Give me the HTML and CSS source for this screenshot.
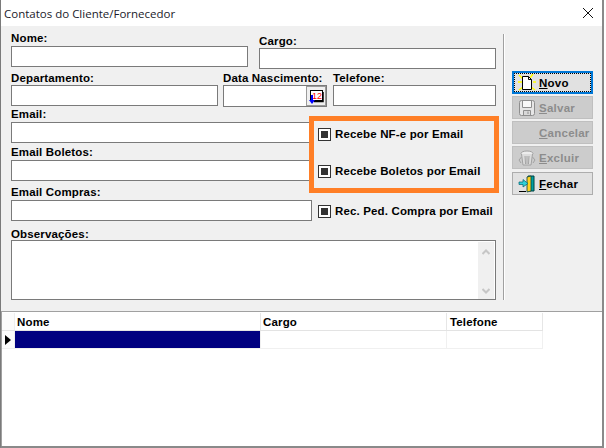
FILE: index.html
```html
<!DOCTYPE html>
<html lang="pt-BR">
<head>
<meta charset="utf-8">
<title>Contatos do Cliente/Fornecedor</title>
<link rel="stylesheet" href="styles.css">
</head>
<body>
<div class="window">
  <header class="titlebar">
    <span class="title">Contatos do Cliente/Fornecedor</span>
    <svg class="close" width="10" height="10" viewBox="0 0 10 10"><path d="M0 0L10 10M10 0L0 10" stroke="#111" stroke-width="1" fill="none"/></svg>
  </header>
  <div class="body">
    <form class="form">
      <div class="row row-1">
        <div class="field f-nome"><label>Nome:</label><div class="input"></div></div>
        <div class="field f-cargo"><label>Cargo:</label><div class="input"></div></div>
      </div>
      <div class="row row-2">
        <div class="field f-depto"><label>Departamento:</label><div class="input"></div></div>
        <div class="field f-data"><label>Data Nascimento:</label>
          <div class="input date">
            <span class="date-btn">
              <svg width="16" height="16" viewBox="0 0 16 16">
                <rect x="2.500" y="2.500" width="12" height="10" fill="#fff" stroke="#000"/>
                <path d="M15 4V13.500H6" stroke="#000" stroke-width="1.500" fill="none"/>
                <text class="cal-num" x="9" y="11" text-anchor="middle">12</text>
                <path d="M4 7V13" stroke="#00f" stroke-width="2"/>
                <path d="M1 12H7L4 16Z" fill="#00f"/>
              </svg>
            </span>
          </div>
        </div>
        <div class="field f-fone"><label>Telefone:</label><div class="input"></div></div>
      </div>
      <div class="row row-3">
        <div class="field f-full"><label>Email:</label><div class="input"></div></div>
      </div>
      <div class="row row-4">
        <div class="field f-full"><label>Email Boletos:</label><div class="input"></div></div>
      </div>
      <div class="row row-5">
        <div class="field f-compras"><label>Email Compras:</label><div class="input"></div></div>
        <div class="check check-compras"><span class="box"></span><span>Rec. Ped. Compra por Email</span></div>
      </div>
      <div class="row row-6">
        <div class="field f-full"><label>Observações:</label>
          <div class="input memo">
            <div class="scroll">
              <svg width="8" height="6" viewBox="0 0 8 6"><path d="M0.5 5L4 1.5L7.5 5" stroke="#c6c6c6" stroke-width="2" fill="none"/></svg>
              <svg width="8" height="6" viewBox="0 0 8 6"><path d="M0.5 1L4 4.5L7.5 1" stroke="#c6c6c6" stroke-width="2" fill="none"/></svg>
            </div>
          </div>
        </div>
      </div>
      <div class="highlight">
        <div class="check"><span class="box"></span><span>Recebe NF-e por Email</span></div>
        <div class="check"><span class="box"></span><span>Recebe Boletos por Email</span></div>
      </div>
    </form>
    <div class="separator"></div>
    <div class="actions">
      <div class="btn focus">
        <span class="ico">
          <svg width="18" height="18" viewBox="0 0 18 18">
            <path d="M1 1L5 5M15 0L12 4M1 16L5 13M17 16L13 13M0 8H4M15 8H18" stroke="#ffff00" stroke-width="1.500"/>
            <path d="M4.500 2.500H10.500L13.500 5.500V15.500H4.500Z" fill="#fff" stroke="#000"/>
            <path d="M10.500 2.500V5.500H13.500" fill="none" stroke="#000"/>
          </svg>
        </span>
        <span class="lbl"><u>N</u>ovo</span>
      </div>
      <div class="btn off">
        <span class="ico">
          <svg width="18" height="18" viewBox="0 0 18 18">
            <rect x="1.500" y="1.500" width="15" height="15" rx="2" fill="#e6e6e6" stroke="#8e8e8e"/>
            <path d="M4.500 2V8.500H13.500V2" fill="#f8f8f8" stroke="#8e8e8e"/>
            <path d="M5.500 16V11.500H12.500V16" fill="#d8d8d8" stroke="#8e8e8e"/>
            <path d="M10 12.500V15" stroke="#8e8e8e"/>
          </svg>
        </span>
        <span class="lbl"><u>S</u>alvar</span>
      </div>
      <div class="btn off">
        <span class="ico"></span>
        <span class="lbl"><u>C</u>ancelar</span>
      </div>
      <div class="btn off">
        <span class="ico">
          <svg width="18" height="18" viewBox="0 0 18 18">
            <ellipse cx="9" cy="4.500" rx="6" ry="2.500" fill="#ececec" stroke="#a2a2a2"/>
            <path d="M3.500 5L5 16H13L14.500 5" fill="#dcdcdc" stroke="#a2a2a2"/>
            <path d="M7 7L7.500 15M9 7V15M11 7L10.500 15M1 11L3.500 8M17 11L14.500 8M1 11L3 14M17 11L15 14" stroke="#a2a2a2"/>
          </svg>
        </span>
        <span class="lbl"><u>E</u>xcluir</span>
      </div>
      <div class="btn last">
        <span class="ico">
          <svg width="18" height="18" viewBox="0 0 18 18">
            <path d="M10 1H16V16H10Z" fill="#00a0a0" stroke="#004040"/>
            <path d="M9 2L13 1V16L9 17Z" fill="#ffd21e" stroke="#004040" stroke-width=".8"/>
            <path d="M1 7H5V4.500L10 8.500L5 12V9.500H1Z" fill="#2fd0d8" stroke="#006070" stroke-width=".7"/>
            <path d="M1 16.500H8" stroke="#000"/>
          </svg>
        </span>
        <span class="lbl"><u>F</u>echar</span>
      </div>
    </div>
  </div>
  <div class="grid">
    <div class="g-row g-head">
      <div class="g-ind"></div>
      <div class="g-cell c-nome">Nome</div>
      <div class="g-cell c-cargo">Cargo</div>
      <div class="g-cell c-fone">Telefone</div>
    </div>
    <div class="g-row g-data">
      <div class="g-ind"><svg width="6" height="10" viewBox="0 0 6 10"><path d="M0 0L6 5L0 10Z" fill="#000"/></svg></div>
      <div class="g-cell c-nome selected"></div>
      <div class="g-cell c-cargo"></div>
      <div class="g-cell c-fone"></div>
    </div>
  </div>
</div>
</body>
</html>
```
FILE: styles.css
```css
* { box-sizing: border-box; }
html, body { margin: 0; padding: 0; }
body {
  width: 606px;
  height: 448px;
  overflow: hidden;
  background: #fff;
  font-family: "Liberation Sans", Arial, sans-serif;
  font-size: 12px;
  color: #000;
}
.window {
  width: 604px;
  height: 448px;
  border-left: 1px solid #7a7a7a;
  border-right: 2px solid #8a8a8a;
  border-bottom: 2px solid #8a8a8a;
  display: flex;
  flex-direction: column;
  background: #fff;
}
.titlebar {
  height: 26px;
  flex: none;
  display: flex;
  align-items: center;
  justify-content: space-between;
  padding: 0 9px 0 3px;
  font-family: "Open Sans", "Noto Sans", sans-serif;
  font-size: 11.5px;
  color: #1a1a2a;
}
.body {
  height: 286px;
  flex: none;
  background: #f0f0f0;
  display: flex;
  border-bottom: 1px solid #a0a0a0;
}
.form {
  position: relative;
  width: 502px;
  flex: none;
  padding: 0 0 0 10px;
}
.row { display: flex; align-items: flex-start; }
.field { display: flex; flex-direction: column; }
label, .check, .g-cell {
  font-weight: 700;
  font-size: 11.5px;
  letter-spacing: 0.15px;
  line-height: 15px;
}
.lbl {
  font-weight: 700;
  font-size: 11.5px;
  letter-spacing: 0.25px;
  line-height: 13px;
  padding-top: 1px;
  white-space: nowrap;
}
.input {
  height: 21px;
  background: #fff;
  border: 1px solid #7a7a7a;
  position: relative;
}
.row-1 { margin-top: 5px; }
.f-nome { width: 237px; }
.f-nome label { height: 15px; }
.f-cargo { width: 237px; margin-left: 11px; margin-top: 3px; }
.f-cargo label { height: 14px; }
.row-2 { margin-top: 2px; }
.row-2 label { height: 14px; }
.f-depto { width: 207px; }
.f-data { width: 104px; margin-left: 5px; white-space: nowrap; }
.f-data .input { height: 22px; }
.f-fone { width: 163px; margin-left: 6px; }
.row-3 { height: 36px; }
.row-3 label { height: 15px; }
.row-4 { margin-top: 2px; height: 36px; }
.row-4 label { height: 15px; }
.f-full { width: 485px; }
.row-5 { margin-top: 4px; }
.row-5 label { height: 15px; }
.f-compras { width: 301px; }
.row-6 { margin-top: 6px; }
.row-6 label { height: 13px; }
.memo { height: 60px; }
.check { display: flex; align-items: center; gap: 4px; white-space: nowrap; }
.check-compras { margin-left: 6px; margin-top: 19px; }
.box {
  width: 13px;
  height: 13px;
  flex: none;
  border: 1px solid #333;
  padding: 2px;
  background-clip: content-box;
  background-color: #333;
  box-shadow: inset 0 0 0 2px #fff;
}
.highlight {
  position: absolute;
  left: 308px;
  top: 90px;
  width: 190px;
  height: 77px;
  border: 5px solid #ff7f27;
  background: #f0f0f0;
  display: flex;
  flex-direction: column;
  gap: 22px;
  padding: 6px 0 0 4px;
}
.date-btn {
  position: absolute;
  right: 0;
  top: 0;
  width: 20px;
  height: 20px;
  background: #f0f0f0;
  border: 1px solid #9a9a9a;
  display: flex;
  align-items: center;
  justify-content: center;
}
.cal-num {
  font-family: "Liberation Sans", Arial, sans-serif;
  font-size: 9px;
  fill: #f00;
}
.scroll {
  position: absolute;
  right: 1px;
  top: 1px;
  bottom: 0;
  width: 16px;
  background: #f0f0f0;
  display: flex;
  flex-direction: column;
  justify-content: space-between;
  align-items: center;
  padding: 7px 0 5px;
}
.separator {
  width: 2px;
  flex: none;
  height: 266px;
  margin-top: 8px;
  background: linear-gradient(to right, #a0a0a0 50%, #fff 50%);
}
.actions {
  margin-left: 7px;
  padding-top: 45px;
  width: 81px;
  display: flex;
  flex-direction: column;
  gap: 2px;
}
.btn {
  height: 23px;
  background: #e1e1e1;
  border: 1px solid #adadad;
  display: flex;
  align-items: center;
  padding-left: 5px;
}
.btn.last { margin-top: 1px; }
.btn.focus {
  border: 2px solid #0078d7;
  padding-left: 4px;
  position: relative;
}
.btn.focus::after {
  content: "";
  position: absolute;
  inset: 0;
  border: 1px dotted #000;
}
.btn.off { background: #cccccc; border-color: #bfbfbf; color: #8c8c8c; }
.ico { width: 18px; height: 18px; flex: none; display: flex; margin-right: 3px; }
.grid { flex: 1; background: #fff; border-left: 1px solid #a0a0a0; padding-top: 1px; }
.g-row { display: flex; height: 18px; width: fit-content; }
.g-head { border-bottom: 1px solid #e3e3e3; }
.g-data { border-bottom: 1px solid #f0f0f0; }
.g-ind {
  width: 13px;
  flex: none;
  background: #fbfbfb;
  border-right: 1px solid #eee;
  display: flex;
  align-items: center;
  justify-content: center;
}
.g-cell { padding-left: 2px; line-height: 19px; border-right: 1px solid #e6e6e6; }
.c-nome { width: 246px; }
.c-cargo { width: 186px; }
.c-fone { width: 96px; padding-left: 3px; }
.g-data .g-cell { border-right-color: #f0f0f0; }
.selected { background: #000080; }
```
